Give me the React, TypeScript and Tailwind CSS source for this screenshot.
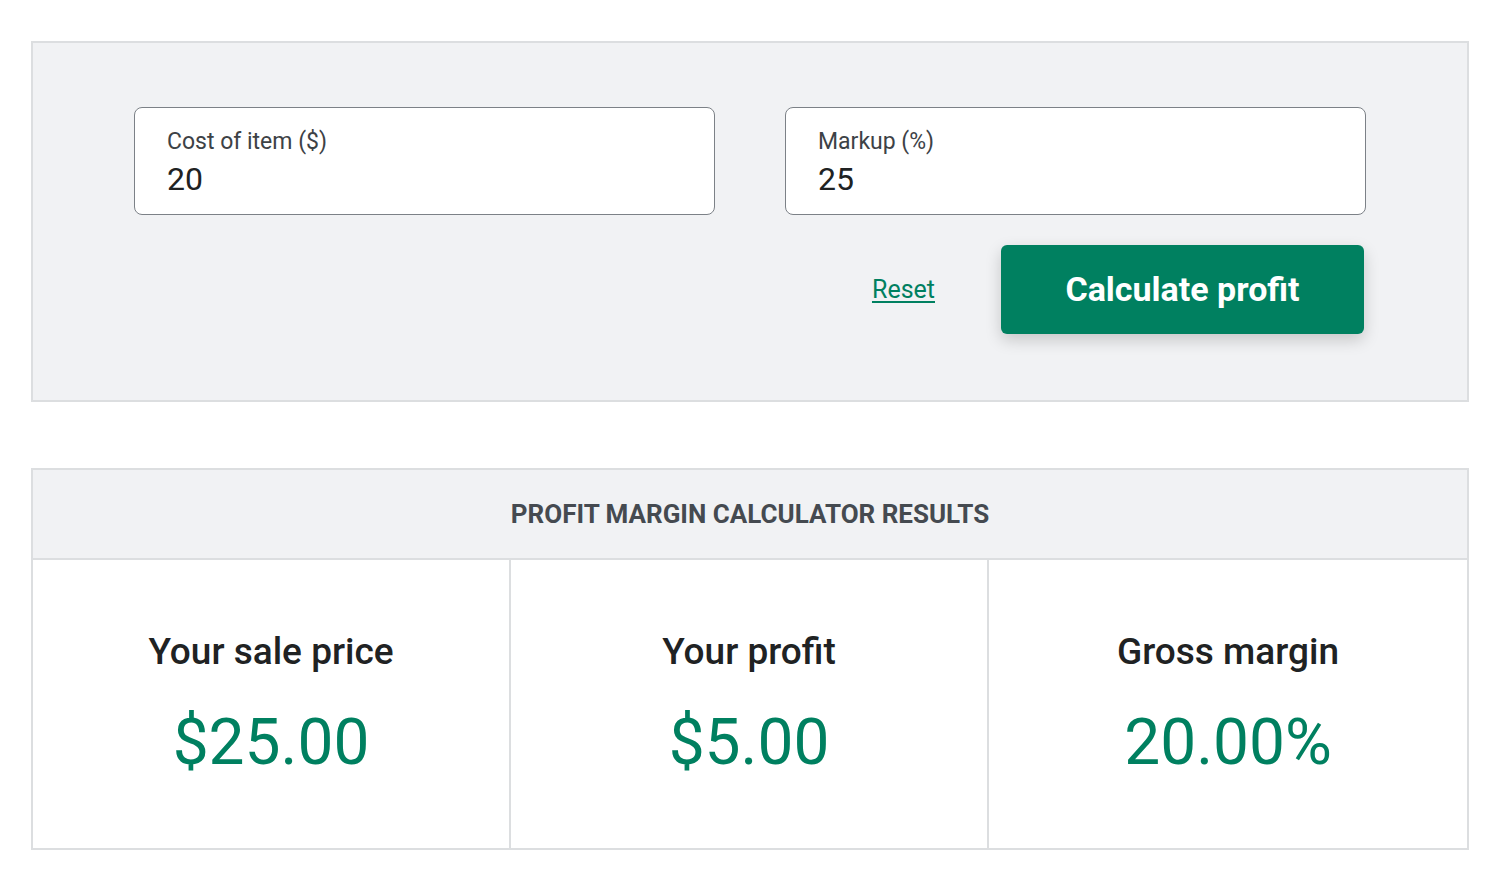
import React, { useState } from "react";

const font = { fontFamily: "Roboto, 'Noto Sans', sans-serif" };

function Field({ label, value, onChange }: { label: string; value: string; onChange: (v: string) => void }) {
    return (
        <label className="flex flex-col h-[108px] rounded-[8px] border-[1.5px] border-[#7c8187] bg-white px-[32px] pt-[19px]">
            <span className="text-[23px] leading-[30px] text-[#3d4246]">{label}</span>
            <input
                value={value}
                onChange={(e) => onChange(e.target.value)}
                className="mt-[2px] w-full bg-transparent text-[32px] leading-[40px] text-[#202223] outline-none"
            />
        </label>
    );
}

function Result({ title, value, last }: { title: string; value: string; last?: boolean }) {
    return (
        <div className={"flex flex-col items-center pt-[70px] " + (last ? "" : "border-r-2 border-[#dcdee0]")}>
            <div className="text-[37px] leading-[44px] font-medium text-[#202223]">{title}</div>
            <div className="mt-[33px] text-[64px] leading-[72px] text-[#008060]">{value}</div>
        </div>
    );
}

export default function App() {
    const [cost, setCost] = useState("20");
    const [markup, setMarkup] = useState("25");

    const c = parseFloat(cost) || 0;
    const m = parseFloat(markup) || 0;
    const price = c * (1 + m / 100);
    const profit = price - c;
    const margin = price ? (profit / price) * 100 : 0;

    return (
        <div className="min-h-screen bg-white px-[31px] pt-[41px]" style={font}>
            {/* Inputs */}
            <div className="border-2 border-[#dcdee0] bg-[#f1f2f4] px-[101px] pt-[64px] pb-[66px]">
                <div className="grid grid-cols-2 gap-[70px]">
                    <Field label="Cost of item ($)" value={cost} onChange={setCost} />
                    <Field label="Markup (%)" value={markup} onChange={setMarkup} />
                </div>
                <div className="mt-[30px] flex items-center justify-end gap-[66px] pr-[2px]">
                    <button
                        onClick={() => { setCost(""); setMarkup(""); }}
                        className="text-[25px] text-[#008060] underline underline-offset-[3px]"
                    >
                        Reset
                    </button>
                    <button className="h-[89px] w-[363px] rounded-[6px] bg-[#008060] text-[34px] font-bold text-white shadow-[0_6px_16px_rgba(0,0,0,0.18)]">
                        Calculate profit
                    </button>
                </div>
            </div>

            {/* Results */}
            <div className="mt-[66px] border-2 border-[#dcdee0]">
                <div className="flex h-[90px] items-center justify-center border-b-2 border-[#dcdee0] bg-[#f1f2f4] text-[26px] font-bold text-[#454a50]">
                    PROFIT MARGIN CALCULATOR RESULTS
                </div>
                <div className="grid h-[288px] grid-cols-3 bg-white">
                    <Result title="Your sale price" value={"$" + price.toFixed(2)} />
                    <Result title="Your profit" value={"$" + profit.toFixed(2)} />
                    <Result title="Gross margin" value={margin.toFixed(2) + "%"} last />
                </div>
            </div>
        </div>
    );
}
